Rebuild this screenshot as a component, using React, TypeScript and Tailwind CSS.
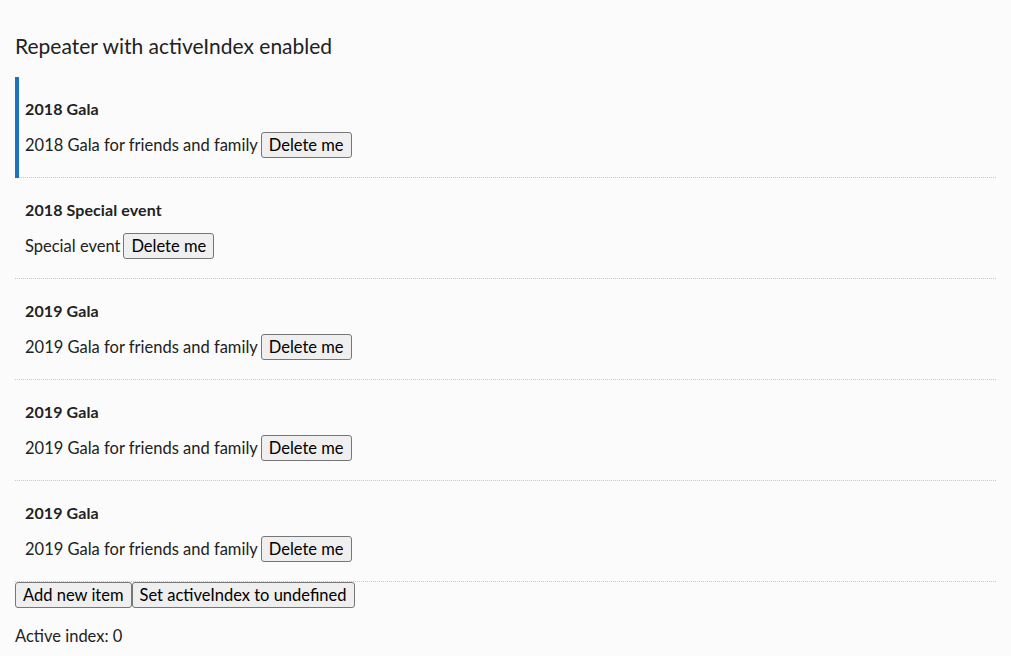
import React from "react";

const items = [
  { title: "2018 Gala", desc: "2018 Gala for friends and family" },
  { title: "2018 Special event", desc: "Special event" },
  { title: "2019 Gala", desc: "2019 Gala for friends and family" },
  { title: "2019 Gala", desc: "2019 Gala for friends and family" },
  { title: "2019 Gala", desc: "2019 Gala for friends and family" },
];

const btn =
  "h-[26px] px-[7px] border border-[#767676] rounded-[3px] bg-[#efefef] text-[16.5px] leading-none text-black";

export default function App() {
  return (
    <div
      className="min-h-[656px] bg-[#fbfbfb] text-[#222] px-[15px] pt-[30px] text-[16.5px]"
      style={{ fontFamily: "Lato, 'Noto Sans', sans-serif" }}
    >
      <h2 className="text-[21px] font-normal leading-[32px] text-[#222] mb-[15px]">
        Repeater with activeIndex enabled
      </h2>
      <div className="flex flex-col">
        {items.map((it, i) => (
          <div key={i} className="flex h-[101px]">
            {i === 0 && <div className="w-[4px] bg-[#1b72c0] shrink-0" />}
            <div
              className={
                "flex-1 border-b border-dotted border-[#c8c8c8] pt-[20px] " +
                (i === 0 ? "pl-[6px]" : "pl-[10px]")
              }
            >
              <div className="font-bold text-[16px] leading-[24px] tracking-[0.1px]">{it.title}</div>
              <div className="flex items-center mt-[11px] leading-[25px]">
                <span>{it.desc}</span>
                <button className={btn + " ml-[3px]"}>Delete me</button>
              </div>
            </div>
          </div>
        ))}
      </div>
      <div className="flex">
        <button className={btn + " h-[25px]"}>Add new item</button>
        <button className={btn + " h-[25px]"}>Set activeIndex to undefined</button>
      </div>
      <p className="mt-[16px] leading-[24px]">Active index: 0</p>
    </div>
  );
}
